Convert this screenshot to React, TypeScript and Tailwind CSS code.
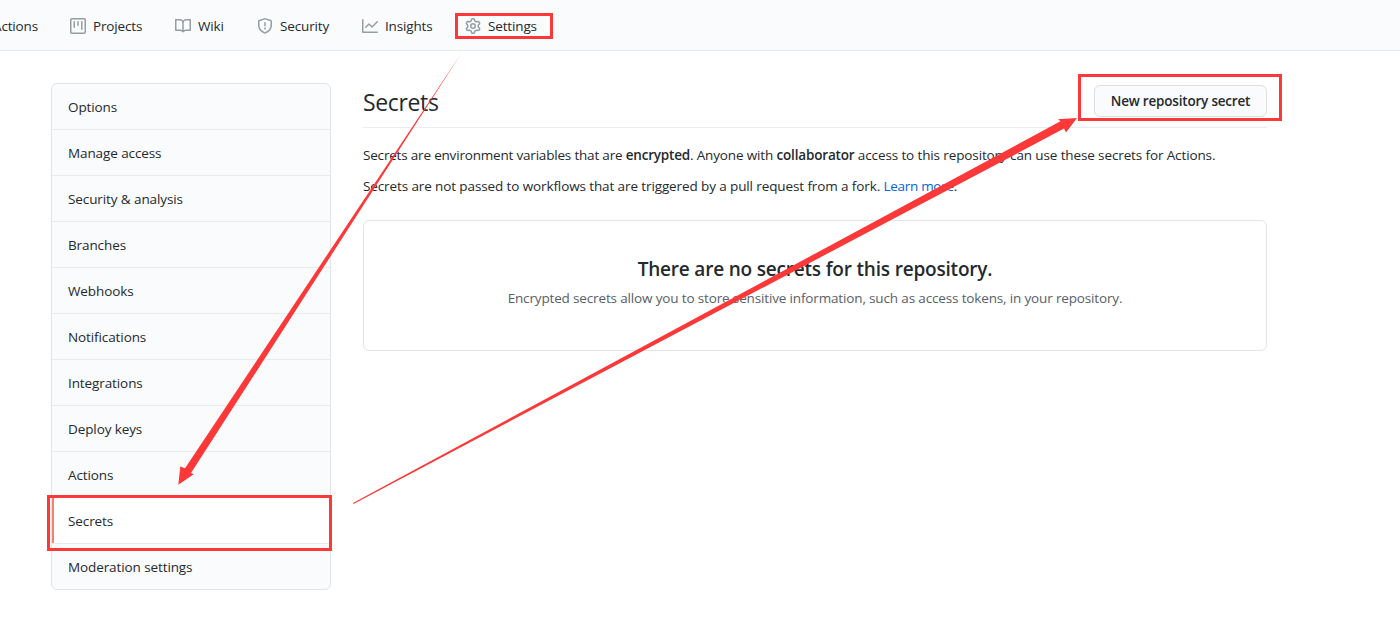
import type { ReactNode } from "react";

const icons = {
  project:
    "M1.75 0A1.75 1.75 0 000 1.75v12.5C0 15.216.784 16 1.75 16h12.5A1.75 1.75 0 0016 14.25V1.75A1.75 1.75 0 0014.25 0H1.75zM1.5 1.75a.25.25 0 01.25-.25h12.5a.25.25 0 01.25.25v12.5a.25.25 0 01-.25.25H1.75a.25.25 0 01-.25-.25V1.75zM11.75 3a.75.75 0 00-.75.75v7.5a.75.75 0 001.5 0v-7.5a.75.75 0 00-.75-.75zm-8.25.75a.75.75 0 011.5 0v5.5a.75.75 0 01-1.5 0v-5.5zM8 3a.75.75 0 00-.75.75v3.5a.75.75 0 001.5 0v-3.5A.75.75 0 008 3z",
  book: "M0 1.75A.75.75 0 01.75 1h4.253c1.227 0 2.317.59 3 1.501A3.744 3.744 0 0111.006 1h4.245a.75.75 0 01.75.75v10.5a.75.75 0 01-.75.75h-4.507a2.25 2.25 0 00-1.591.659l-.622.621a.75.75 0 01-1.06 0l-.622-.621A2.25 2.25 0 005.258 13H.75a.75.75 0 01-.75-.75V1.75zm8.755 3a2.25 2.25 0 012.25-2.25H14.5v9h-3.757c-.71 0-1.4.201-1.992.572l.004-7.322zm-1.504 7.324l.004-5.073-.002-2.253A2.25 2.25 0 005.003 2.5H1.5v9h3.757a3.75 3.75 0 011.994.574z",
  shield:
    "M7.467.133a1.75 1.75 0 011.066 0l5.25 1.68A1.75 1.75 0 0115 3.48V7c0 1.566-.32 3.182-1.303 4.682-.983 1.498-2.585 2.813-5.032 3.855a1.7 1.7 0 01-1.33 0c-2.447-1.042-4.049-2.357-5.032-3.855C1.32 10.182 1 8.566 1 7V3.48a1.75 1.75 0 011.217-1.667l5.25-1.68zm.61 1.429a.25.25 0 00-.153 0l-5.25 1.68a.25.25 0 00-.174.238V7c0 1.358.275 2.666 1.057 3.86.784 1.194 2.121 2.34 4.366 3.297a.2.2 0 00.154 0c2.245-.956 3.582-2.104 4.366-3.298C13.225 9.666 13.5 8.36 13.5 7V3.48a.25.25 0 00-.174-.237l-5.25-1.68zM9 10.5a1 1 0 11-2 0 1 1 0 012 0zm-.25-5.75a.75.75 0 10-1.5 0v3a.75.75 0 001.5 0v-3z",
  graph:
    "M1.5 1.75a.75.75 0 00-1.5 0v12.5c0 .414.336.75.75.75h14.5a.75.75 0 000-1.5H1.5V1.75zm14.28 2.53a.75.75 0 00-1.06-1.06L10 7.94 7.53 5.47a.75.75 0 00-1.06 0L3.22 8.72a.75.75 0 001.06 1.06L7 7.06l2.47 2.47a.75.75 0 001.06 0l5.25-5.25z",
  gear: "M7.429 1.525a6.593 6.593 0 011.142 0c.036.003.108.036.137.146l.289 1.105c.147.56.55.967.997 1.189.174.086.341.183.501.29.417.278.97.423 1.53.27l1.102-.303c.11-.03.175.016.195.046.219.31.41.641.573.989.014.031.022.11-.059.19l-.815.806c-.411.406-.562.957-.53 1.456a4.588 4.588 0 010 .582c-.032.499.119 1.05.53 1.456l.815.806c.08.08.073.159.059.19a6.494 6.494 0 01-.573.99c-.02.029-.086.074-.195.045l-1.103-.303c-.559-.153-1.112-.008-1.529.27-.16.107-.327.204-.5.29-.449.222-.851.628-.998 1.189l-.289 1.105c-.029.11-.101.143-.137.146a6.613 6.613 0 01-1.142 0c-.036-.003-.108-.037-.137-.146l-.289-1.105c-.147-.56-.55-.967-.997-1.189a4.502 4.502 0 01-.501-.29c-.417-.278-.97-.423-1.53-.27l-1.102.303c-.11.03-.175-.016-.195-.046a6.492 6.492 0 01-.573-.989c-.014-.031-.022-.11.059-.19l.815-.806c.411-.406.562-.957.53-1.456a4.587 4.587 0 010-.582c.032-.499-.119-1.05-.53-1.456l-.815-.806c-.08-.08-.073-.159-.059-.19a6.44 6.44 0 01.573-.99c.02-.029.086-.075.195-.045l1.103.303c.559.153 1.112.008 1.529-.27.16-.107.327-.204.5-.29.449-.222.851-.628.998-1.189l.289-1.105c.029-.11.101-.143.137-.146zM8 0c-.236 0-.47.01-.701.03-.743.065-1.29.615-1.458 1.261l-.29 1.106c-.017.066-.078.158-.211.224a5.994 5.994 0 00-.668.386c-.123.082-.233.09-.3.071L3.27 2.776c-.644-.177-1.392.02-1.82.63a7.977 7.977 0 00-.704 1.217c-.315.675-.111 1.422.363 1.891l.815.806c.05.048.098.147.088.294a6.084 6.084 0 000 .772c.01.147-.038.246-.088.294l-.815.806c-.474.469-.678 1.216-.363 1.891.2.428.436.835.704 1.218.428.609 1.176.806 1.82.63l1.103-.303c.066-.019.176-.011.299.071.213.143.436.272.668.386.133.066.194.158.212.224l.289 1.106c.169.646.715 1.196 1.458 1.26a8.094 8.094 0 001.402 0c.743-.064 1.29-.614 1.458-1.26l.29-1.106c.017-.066.078-.158.211-.224a5.98 5.98 0 00.668-.386c.123-.082.233-.09.3-.071l1.102.302c.644.177 1.392-.02 1.82-.63.268-.382.505-.789.704-1.217.315-.675.111-1.422-.364-1.891l-.814-.806c-.05-.048-.098-.147-.088-.294a6.1 6.1 0 000-.772c-.01-.147.039-.246.088-.294l.814-.806c.475-.469.679-1.216.364-1.891a7.992 7.992 0 00-.704-1.218c-.428-.609-1.176-.806-1.82-.63l-1.103.303c-.066.019-.176.011-.299-.071a5.991 5.991 0 00-.668-.386c-.133-.066-.194-.158-.212-.224L10.16 1.29C9.99.645 9.444.095 8.701.031A8.094 8.094 0 008 0zm1.5 8a1.5 1.5 0 11-3 0 1.5 1.5 0 013 0zM11 8a3 3 0 11-6 0 3 3 0 016 0z",
};

function Tab({ icon, width, children }: { icon: keyof typeof icons; width: string; children: ReactNode }) {
  return (
    <a className={`flex shrink-0 items-center gap-[7px] ${width}`}>
      <svg viewBox="0 0 16 16" className="size-4 shrink-0 fill-[#959da5]">
        <path fillRule="evenodd" d={icons[icon]} />
      </svg>
      <span>{children}</span>
    </a>
  );
}

const menu = [
  "Options",
  "Manage access",
  "Security & analysis",
  "Branches",
  "Webhooks",
  "Notifications",
  "Integrations",
  "Deploy keys",
  "Actions",
  "Secrets",
  "Moderation settings",
];

export default function App() {
  return (
    <div className="relative h-[630px] w-[1400px] overflow-hidden bg-white font-['Open_Sans','Noto_Sans',sans-serif] text-[13.5px] leading-[21px] tracking-[-0.15px] text-[#24292e]">
      <nav className="flex h-[51px] items-center border-b border-[#e6e9ec] bg-[#fafbfc] pb-px pt-[3px]">
        <span className="flex w-[70px] shrink-0">
          <span className="-ml-[7px]">Actions</span>
        </span>
        <Tab icon="project" width="w-[105px]">Projects</Tab>
        <Tab icon="book" width="w-[82px]">Wiki</Tab>
        <Tab icon="shield" width="w-[105px]">Security</Tab>
        <Tab icon="graph" width="w-[103px]">Insights</Tab>
        <Tab icon="gear" width="w-[90px]">Settings</Tab>
      </nav>

      <div className="flex gap-8 pl-[51px] pt-8">
        <aside className="flex w-[280px] shrink-0 flex-col overflow-hidden rounded-md border border-[#e1e4e8] bg-[#fafbfc] tracking-[-0.1px]">
          {menu.map((label) => (
            <a
              key={label}
              className={`flex h-[46px] items-center border-b border-[#e8eaed] pl-4 pt-0.5 last:h-[45px] last:border-b-0 ${
                label === "Secrets" ? "bg-white shadow-[inset_2px_0_0_#f9826c]" : ""
              }`}
            >
              {label}
            </a>
          ))}
        </aside>

        <main className="w-[904px]">
          <header className="flex h-[45px] items-start justify-between border-b border-[#eaecef]">
            <h2 className="pt-px text-[23px] leading-9 tracking-[-0.35px]">Secrets</h2>
            <button className="mt-[2px] flex h-8 w-[173px] items-center justify-center rounded-md border border-[#dcdee0] bg-[#fafbfc] font-semibold tracking-[-0.2px]">
              New repository secret
            </button>
          </header>
          <p className="mt-[17px]">
            <span className="tracking-[-0.19px]">Secrets are environment variables that are </span>
            <strong className="font-semibold tracking-[-0.2px]">encrypted</strong>. Anyone with{" "}
            <strong className="font-semibold tracking-[-0.17px]">collaborator</strong>
            <span className="tracking-[-0.12px]"> access to this repository can use these secrets for Actions.</span>
          </p>
          <p className="mt-[10px] tracking-[-0.11px]">
            Secrets are not passed to workflows that are triggered by a pull request from a fork.{" "}
            <a className="tracking-[-0.3px] text-[#0366d6]">Learn more</a>.
          </p>
          <section className="mt-[23px] flex h-[131px] flex-col items-center rounded-md border border-[#e1e4e8] pt-[33px]">
            <h3 className="text-[19px] font-semibold leading-[30px] tracking-[-0.19px]">
              There are no secrets for this repository.
            </h3>
            <p className="mt-1 text-[#586069]">
              Encrypted secrets allow you to store sensitive information, such as access tokens, in your repository.
            </p>
          </section>
        </main>
      </div>

      <div className="absolute left-[455px] top-[13px] h-[26px] w-[98px] border-[3px] border-[#fc3838]" />
      <div className="absolute left-[1078px] top-[74px] h-[47px] w-[204px] border-[3px] border-[#fc3838]" />
      <div className="absolute left-[47px] top-[495px] h-[56px] w-[285px] border-[3px] border-[#fc3838]" />
      <svg viewBox="0 0 1400 630" className="absolute inset-0 h-[630px] w-[1400px] fill-[#fc3838]">
        <path d="M461.5 53L185 468.3L180.3 466.5L178.3 484.8L193.7 474.3L191 473Z" />
        <path d="M353 503L1060.5 121.2L1058 119.3L1077 118L1066 132.4L1064 128.6L353.5 504Z" />
      </svg>
    </div>
  );
}
